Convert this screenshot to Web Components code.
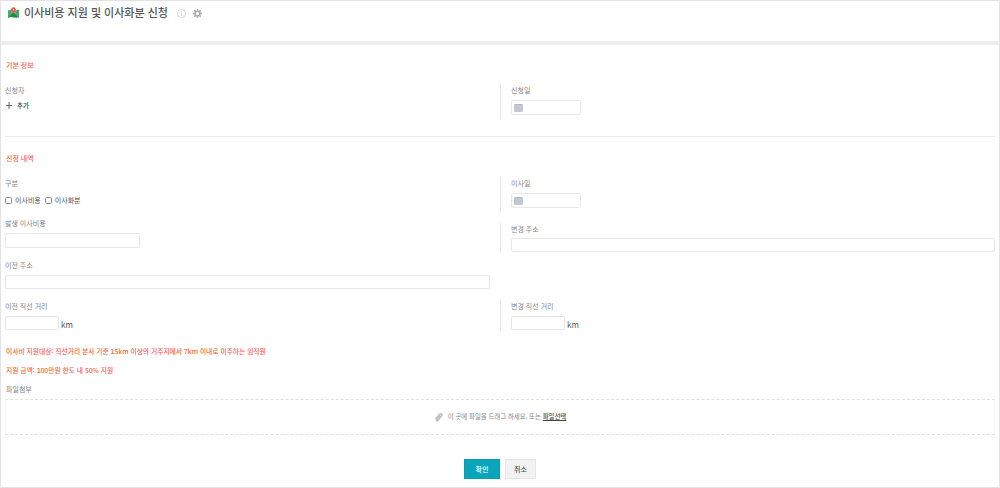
<!DOCTYPE html>
<html lang="ko"><head><meta charset="utf-8"><title>이사비용 지원 및 이사화분 신청</title>
<style>
html,body{margin:0;padding:0;background:#fff}
body{font-family:"Noto Sans CJK KR","Noto Sans",sans-serif;color:#555;width:1000px;height:488px;overflow:hidden}
</style></head><body>
<app-page>
  <page-header slot="header">이사비용 지원 및 이사화분 신청</page-header>

  <section-title style="--top:14px;--bottom:12px">기본 정보</section-title>
  <form-grid>
    <form-field label="신청자" style="--h:36px;--pad:1px;--gap:3px"><add-button>추가</add-button></form-field>
    <form-field side label="신청일" style="--h:36px;--pad:1px;--gap:4px"><date-input></date-input></form-field>
  </form-grid>
  <form-rule></form-rule>
  <section-title style="--top:15px;--bottom:13px">신청 내역</section-title>
  <form-grid>
    <form-field label="구분" style="--h:36px;--gap:5px"><span style="display:flex;gap:4px"><check-box>이사비용</check-box><check-box>이사화분</check-box></span></form-field>
    <form-field side label="이사일" style="--h:36px;--gap:4px"><date-input></date-input></form-field>
  </form-grid>
  <form-grid>
    <form-field label="발생 이사비용" style="--mt:4px;--gap:4px"><text-input style="--w:135px;--ih:15px"></text-input></form-field>
    <form-field side label="변경 주소" style="--mt:10px;--h:29px;--gap:3px"><text-input style="--w:484px"></text-input></form-field>
  </form-grid>
  <form-grid>
    <form-field label="이전 주소" style="--mt:7px;--gap:4px"><text-input style="--w:485px"></text-input></form-field>
    <span></span>
  </form-grid>
  <form-grid>
    <form-field label="이전 직선 거리" style="--mt:11px;--h:31px;--gap:4px"><km-input></km-input></form-field>
    <form-field side label="변경 직선 거리" style="--mt:11px;--h:31px;--gap:4px"><km-input></km-input></form-field>
  </form-grid>
  <notice-text style="--mt:14px">이사비 지원대상: 직선거리 본사 기준 15km 이상의 거주지에서 7km 이내로 이주하는 임직원</notice-text>
  <notice-text style="--mt:7px">지원 금액: 100만원 한도 내 50% 지원</notice-text>
  <file-drop></file-drop>
  <form-actions><app-button primary>확인</app-button><app-button>취소</app-button></form-actions>
</app-page>
<script>
function def(name,css,html,init){
  customElements.define(name,class extends HTMLElement{
    constructor(){super();this.attachShadow({mode:"open"}).innerHTML=`<style>${css}</style>${html}`;}
    connectedCallback(){if(init)init(this);}
  });
}
def("app-page",`:host{display:block;box-sizing:border-box;width:1000px;height:488px;border:1px solid #e3e3e3;overflow:hidden}
.body{padding:0 4px}`,`<slot name="header"></slot><div class="body"><slot></slot></div>`);
def("page-header",`:host{display:flex;align-items:flex-start;box-sizing:border-box;height:44px;border-bottom:4px solid #eee;padding:2px 0 0 7px;color:#555;font-size:11px;line-height:18px;font-weight:500}
svg{flex:none}.logo{margin:4px 5px 0 0}.info{margin:6px 0 0 9px}.gear{margin:6px 0 0 7px}`,
`<svg class="logo" width="11" height="11" viewBox="0 0 11 11"><path d="M0 3.5l3.5-1 4 1 3.5-1v8l-3.5.5-4-1-3.5 1z" fill="#4aa765"/><path d="M3.5 2.5l4 1v7.5l-4-1z" fill="#86c48a"/><path d="M1 10l4.5-5 4 5z" fill="#2f8050"/><circle cx="5.5" cy="2.6" r="2.3" fill="#e2544f"/><circle cx="5.5" cy="2.6" r=".8" fill="#f7c9c4"/><path d="M3.9 4L5.5 6.2 7.1 4z" fill="#e2544f"/></svg>
<slot></slot>
<svg class="info" width="9" height="9" viewBox="0 0 9 9"><circle cx="4.5" cy="4.5" r="4" fill="none" stroke="#cfcfcf" stroke-width=".9"/><path d="M4.5 4v2.8M4.5 2.1v1" stroke="#c8c8c8" stroke-width=".9"/></svg>
<svg class="gear" width="9" height="9" viewBox="0 0 9 9"><circle cx="4.5" cy="4.5" r="2.5" fill="none" stroke="#aaa" stroke-width="1.6"/><path d="M4.5 0v1.5M4.5 7.5V9M0 4.5h1.5M7.5 4.5H9M1.3 1.3l1 1M6.7 6.7l1 1M7.7 1.3l-1 1M2.3 6.7l-1 1" stroke="#aaa" stroke-width="1.3"/></svg>`);
def("section-title",`:host{display:block;color:#fa5f48;font-size:7px;line-height:12px;font-weight:500;margin:var(--top,0) 0 var(--bottom,0);padding-left:1px}`,`<slot></slot>`);
def("form-grid",`:host{display:grid;grid-template-columns:495px 1fr;align-items:start}`,`<slot></slot>`);
def("form-field",`:host{display:block;box-sizing:border-box;min-height:var(--h,0);margin-top:var(--mt,0);padding-top:var(--pad,0)}
:host([side]){border-left:1px solid #e8e8e8;padding-left:10px}
label{display:block;color:#858585;font-size:7px;line-height:12px;margin-bottom:var(--gap,3px)}`,
`<label></label><slot></slot>`,el=>{el.shadowRoot.querySelector("label").textContent=el.getAttribute("label")});
def("form-rule",`:host{display:block;height:1px;background:#ebebeb;margin-top:17px}`,``);
def("add-button",`:host{display:flex;align-items:center;gap:5px;color:#444;font-size:6.5px;line-height:12px;font-weight:500;padding-left:1px}`,`<svg width="6" height="7" viewBox="0 0 6 7"><path d="M3 0v7M0 3.5h6" stroke="#555" stroke-width=".9"/></svg><slot></slot>`);
def("date-input",`:host{display:flex;align-items:center;box-sizing:border-box;width:70px;height:15px;border:1px solid #e8e8e8;border-radius:2px;padding-left:2px;background:#fff}
i{display:block;width:9px;height:8px;border-radius:1.5px;background:#c4c7d0;border-top:1px solid #b5b8c2;box-sizing:border-box}`,`<i></i>`);
def("text-input",`:host{display:block;box-sizing:border-box;width:var(--w,100px);height:var(--ih,14px);border:1px solid #e8e8e8;border-radius:2px;background:#fff}`,``);
def("km-input",`:host{display:flex;align-items:flex-start;gap:2px;color:#555;font-size:8px;height:14px}
b{display:block;box-sizing:border-box;width:54px;height:14px;border:1px solid #e6e6e6;border-radius:2px}
span{line-height:18px;height:14px}`,`<b></b><span>km</span>`);
def("check-box",`:host{display:inline-flex;align-items:center;gap:3px;color:#555;font-size:7px;line-height:12px;font-weight:400}
i{display:block;box-sizing:border-box;width:7px;height:7px;border:1px solid #888;border-radius:1.5px;background:#fff}`,`<i></i><slot></slot>`);
def("notice-text",`:host{display:block;color:#fa5f48;font-size:6.75px;line-height:12px;font-weight:500;margin-top:var(--mt,0);padding-left:1px}`,`<slot></slot>`);
def("file-drop",`:host{display:block;margin-top:7px}
label{display:block;color:#858585;font-size:7px;line-height:12px;margin-bottom:4px;padding-left:1px}
.box{box-sizing:border-box;width:990px;height:36px;border-top:1px dashed #e0e0e0;border-bottom:1px dashed #e0e0e0;border-left:1px solid #f2f2f2;border-right:1px solid #f2f2f2;display:flex;align-items:center;justify-content:center;gap:4px;color:#888;font-size:6.4px;line-height:12px}
u{color:#444;font-weight:500}
svg{flex:none}`,`<label>파일첨부</label><div class="box"><svg width="10" height="11" viewBox="0 0 10 11"><path d="M1.6 7L6 2.2c1-1 2.7.3 1.7 1.6L3.6 8.4c-.6.7-1.8-.1-1.1-1L6.2 3.4" fill="none" stroke="#c2c2c2" stroke-width="1.8"/></svg><span>이 곳에 파일을 드래그 하세요. 또는 <u>파일선택</u></span></div>`);
def("form-actions",`:host{display:flex;justify-content:center;gap:5px;margin-top:24px}`,`<slot></slot>`);
def("app-button",`:host{display:flex;align-items:center;justify-content:center;box-sizing:border-box;height:20px;width:31px;background:#f2f2f2;border:1px solid #e6e6e6;color:#555;font-size:7px;font-weight:500}
:host([primary]){width:36px;background:#0aa5bc;border-color:#0a9db3;color:#fff}`,`<slot></slot>`);
</script>
</body></html>
